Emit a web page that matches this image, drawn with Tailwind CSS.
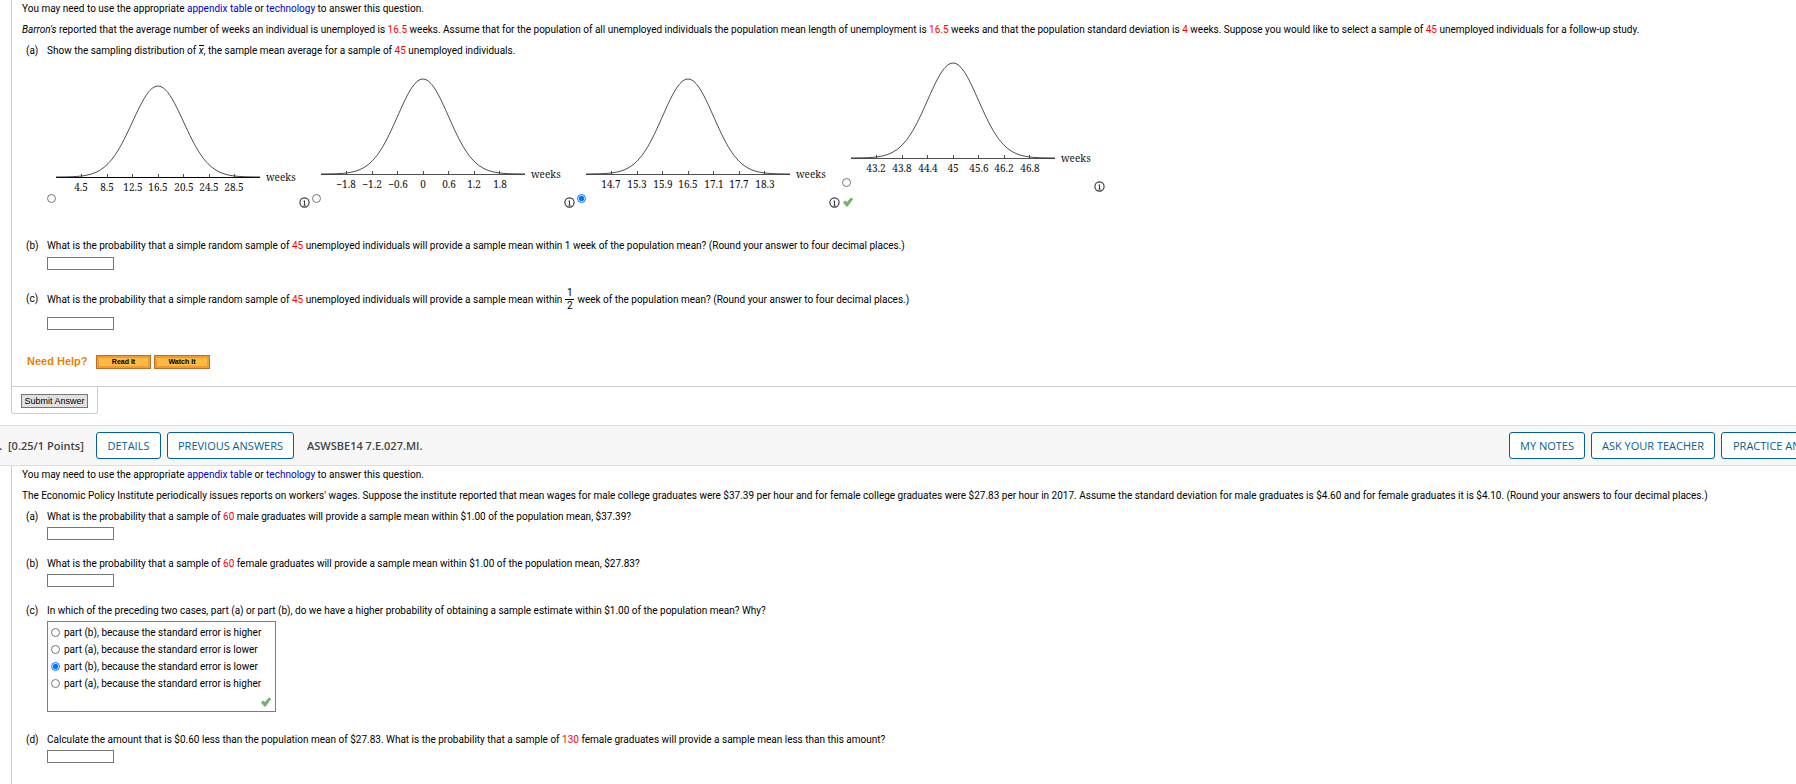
<!DOCTYPE html>
<html lang="en">
<head>
<meta charset="utf-8">
<title>Sampling distributions</title>
<script src="https://cdn.jsdelivr.net/npm/@tailwindcss/browser@4"></script>
</head>
<body class="bg-white overflow-hidden font-['Roboto',sans-serif] text-[10px] leading-[15px] text-black">

<svg class="hidden">
  <symbol id="info" viewBox="0 0 11 11">
    <circle cx="5.5" cy="5.5" r="4.6" fill="#fff" stroke="#333" stroke-width="1.1"/>
    <path d="M5.5 3.6V8.2M4.6 4.1H5.5M4.6 8.2H6.6" fill="none" stroke="#222" stroke-width=".9"/>
  </symbol>
  <symbol id="check" viewBox="0 0 10 10">
    <path d="M0.4 5.6L2.2 3.9L4 5.5L8 0.9L9.7 2.1L4.4 9.2H3.6Z" fill="#6dbb63" stroke="#4b9a45" stroke-width=".6"/>
  </symbol>
</svg>

<main>
  <section class="ml-[11px] border-l border-b border-[#ccc] pt-px pl-[9px] pb-[17px] whitespace-nowrap">
    <div class="grid gap-[6px] pl-px">
      <p>You may need to use the appropriate <a href="#" class="text-[#0000cc]">appendix table</a> or <a href="#" class="text-[#0000cc]">technology</a> to answer this question.</p>
      <p><i>Barron's</i> reported that the average number of weeks an individual is unemployed is <span class="text-[#f00]">16.5</span> weeks. Assume that for the population of all unemployed individuals the population mean length of unemployment is <span class="text-[#f00]">16.5</span> weeks and that the population standard deviation is <span class="text-[#f00]">4</span> weeks. Suppose you would like to select a sample of <span class="text-[#f00]">45</span> unemployed individuals for a follow-up study.</p>
    </div>

    <div class="mt-[6px] flex pl-[5px]">
      <span class="w-[21px]">(a)</span>
      <p>Show the sampling distribution of <span class="inline-block border-t border-black leading-[9px] italic">x</span>, the sample mean average for a sample of <span class="text-[#f00]">45</span> unemployed individuals.</p>
    </div>
    <fieldset class="mt-px flex items-end gap-[2px] pl-[26px] font-['Noto_Serif','DejaVu_Serif',serif]">
      <div class="flex items-end">
        <input type="radio" name="dist" aria-label="Distribution centred at 16.5, spread 4" class="mb-[5px] size-[9px]">
        <svg class="w-[240px] h-[133px]" viewBox="0 0 240 133" fill="none" stroke="#222">
          <path d="M0 102.5H204" stroke="#000" stroke-width="1.2"/>
          <path stroke-width=".8" d="M25.5 99V102M51.5 99V102M76.5 99V102M102.5 99V102M127.5 99V102M153.5 99V102M178.5 99V102"/>
          <path data-base="102" data-height="91" stroke-width=".8"/>
          <g fill="#111" stroke="none" text-anchor="middle" font-size="10"><text x="25" y="116">4.5</text><text x="51" y="116">8.5</text><text x="77" y="116">12.5</text><text x="102" y="116">16.5</text><text x="128" y="116">20.5</text><text x="153" y="116">24.5</text><text x="178" y="116">28.5</text></g>
          <text x="210" y="106" fill="#111" stroke="none" font-size="10">weeks</text>
        </svg>
        <button type="button" aria-label="Description" class="ml-[3px] size-[11px]"><svg class="size-[11px]"><use href="#info"/></svg></button>
      </div>
      <div class="flex items-end">
        <input type="radio" name="dist" aria-label="Distribution centred at 0" class="mb-[5px] size-[9px]">
        <svg class="w-[240px] h-[133px]" viewBox="0 0 240 133" fill="none" stroke="#222">
          <path d="M0 99.5H204" stroke-width=".8"/>
          <path stroke-width=".8" d="M25.5 96V99M51.5 96V99M76.5 96V99M102.5 96V99M127.5 96V99M153.5 96V99M178.5 96V99"/>
          <path data-base="99" data-height="95" stroke-width=".8"/>
          <g fill="#111" stroke="none" text-anchor="middle" font-size="10"><text x="25" y="113">−1.8</text><text x="51" y="113">−1.2</text><text x="77" y="113">−0.6</text><text x="102" y="113">0</text><text x="128" y="113">0.6</text><text x="153" y="113">1.2</text><text x="179" y="113">1.8</text></g>
          <text x="210" y="103" fill="#111" stroke="none" font-size="10">weeks</text>
        </svg>
        <button type="button" aria-label="Description" class="ml-[3px] size-[11px]"><svg class="size-[11px]"><use href="#info"/></svg></button>
      </div>
      <div class="flex items-end">
        <input type="radio" name="dist" checked aria-label="Distribution centred at 16.5, spread 0.6" class="mb-[5px] size-[9px]">
        <svg class="w-[240px] h-[133px]" viewBox="0 0 240 133" fill="none" stroke="#222">
          <path d="M0 99.5H204" stroke-width=".8"/>
          <path stroke-width=".8" d="M25.5 96V99M51.5 96V99M76.5 96V99M102.5 96V99M127.5 96V99M153.5 96V99M178.5 96V99"/>
          <path data-base="99" data-height="95" stroke-width=".8"/>
          <g fill="#111" stroke="none" text-anchor="middle" font-size="10"><text x="25" y="113">14.7</text><text x="51" y="113">15.3</text><text x="77" y="113">15.9</text><text x="102" y="113">16.5</text><text x="128" y="113">17.1</text><text x="153" y="113">17.7</text><text x="179" y="113">18.3</text></g>
          <text x="210" y="103" fill="#111" stroke="none" font-size="10">weeks</text>
        </svg>
        <button type="button" aria-label="Description" class="ml-[3px] size-[11px]"><svg class="size-[11px]"><use href="#info"/></svg></button>
      </div>
      <div>
        <div class="flex items-end">
          <input type="radio" name="dist" aria-label="Distribution centred at 45" class="mb-[5px] size-[9px]">
          <svg class="w-[240px] h-[133px]" viewBox="0 0 240 133" fill="none" stroke="#222">
            <path d="M0 99.5H204" stroke-width=".8"/>
            <path stroke-width=".8" d="M25.5 96V99M51.5 96V99M76.5 96V99M102.5 96V99M127.5 96V99M153.5 96V99M178.5 96V99"/>
            <path data-base="99" data-height="95" stroke-width=".8"/>
            <g fill="#111" stroke="none" text-anchor="middle" font-size="10"><text x="25" y="113">43.2</text><text x="51" y="113">43.8</text><text x="77" y="113">44.4</text><text x="102" y="113">45</text><text x="128" y="113">45.6</text><text x="153" y="113">46.2</text><text x="179" y="113">46.8</text></g>
            <text x="210" y="103" fill="#111" stroke="none" font-size="10">weeks</text>
          </svg>
          <button type="button" aria-label="Description" class="ml-[3px] size-[11px]"><svg class="size-[11px]"><use href="#info"/></svg></button>
        </div>
        <div class="flex h-[16px] items-end pb-px pl-px"><svg class="size-[10px]" role="img" aria-label="Correct"><use href="#check"/></svg></div>
      </div>
    </fieldset>

    <div class="mt-[30px] flex pl-[5px]">
      <span class="w-[21px]">(b)</span>
      <div>
        <label for="q1b" class="block">What is the probability that a simple random sample of <span class="text-[#f00]">45</span> unemployed individuals will provide a sample mean within 1 week of the population mean? (Round your answer to four decimal places.)</label>
        <input id="q1b" type="text" class="mt-[4px] block h-[13px] w-[67px] border border-[#767676]">
      </div>
    </div>
    <div class="mt-[17px] flex pl-[5px]">
      <span class="w-[21px] leading-[24px]">(c)</span>
      <div>
        <label for="q1c" class="flex items-center gap-[3px]"><span>What is the probability that a simple random sample of <span class="text-[#f00]">45</span> unemployed individuals will provide a sample mean within</span><span class="flex w-[9px] flex-col text-center leading-[12px]"><span class="border-b border-black">1</span><span>2</span></span><span>week of the population mean? (Round your answer to four decimal places.)</span></label>
        <input id="q1c" type="text" class="mt-[5px] block h-[13px] w-[67px] border border-[#767676]">
      </div>
    </div>

    <div class="mt-[24px] flex items-center gap-[3px] pl-[6px] font-['Liberation_Sans',sans-serif] font-bold">
      <span class="w-[66px] text-[11px] text-[#e98300]">Need Help?</span>
      <button type="button" class="h-[14px] w-[55px] border border-[#b8722c] bg-[#fdb940] text-[7px] leading-[10px] inset-ring-2 inset-ring-[#f09a35]">Read It</button>
      <button type="button" class="h-[14px] w-[56px] border border-[#b8722c] bg-[#fdb940] text-[7px] leading-[10px] inset-ring-2 inset-ring-[#f09a35]">Watch It</button>
    </div>
  </section>

  <div class="ml-[11px] flex h-[27px] w-[87px] items-center justify-center rounded-b-[3px] border border-t-0 border-[#ccc] pt-px">
    <button type="submit" class="h-[14px] w-[67px] border border-[#767676] bg-[#e1e1e1] font-['Liberation_Sans',sans-serif] text-[9px] leading-[12px] whitespace-nowrap">Submit Answer</button>
  </div>

  <header class="mt-[11px] flex h-[41px] items-center overflow-hidden border-y border-[#ddd] bg-[#f7f7f7] font-['Open_Sans',sans-serif] text-[11px] whitespace-nowrap text-[#006298]">
    <span class="-ml-px w-[9px] font-bold">.</span>
    <span class="w-[88px] font-semibold text-[#444]">[0.25/1 Points]</span>
    <button type="button" class="h-[27px] w-[65px] rounded-[3px] border border-[#006298] bg-white">DETAILS</button>
    <button type="button" class="ml-[6px] h-[27px] w-[127px] rounded-[3px] border border-[#006298] bg-white">PREVIOUS ANSWERS</button>
    <span class="ml-[13px] font-semibold text-[#444]">ASWSBE14 7.E.027.MI.</span>
    <div class="-mr-[53px] ml-auto flex gap-[6px]">
      <button type="button" class="h-[27px] w-[76px] rounded-[3px] border border-[#006298] bg-white">MY NOTES</button>
      <button type="button" class="h-[27px] w-[124px] rounded-[3px] border border-[#006298] bg-white">ASK YOUR TEACHER</button>
      <button type="button" class="h-[27px] w-[128px] rounded-[3px] border border-[#006298] bg-white px-[11px] text-left">PRACTICE ANOTHER</button>
    </div>
  </header>

  <section class="ml-[11px] border-l border-[#ccc] pt-px pl-[9px] pb-[40px] whitespace-nowrap">
    <div class="grid gap-[6px] pl-px">
      <p>You may need to use the appropriate <a href="#" class="text-[#0000cc]">appendix table</a> or <a href="#" class="text-[#0000cc]">technology</a> to answer this question.</p>
      <p>The Economic Policy Institute periodically issues reports on workers' wages. Suppose the institute reported that mean wages for male college graduates were $37.39 per hour and for female college graduates were $27.83 per hour in 2017. Assume the standard deviation for male graduates is $4.60 and for female graduates it is $4.10. (Round your answers to four decimal places.)</p>
    </div>
    <div class="mt-[6px] flex pl-[5px]">
      <span class="w-[21px]">(a)</span>
      <div>
        <label for="q2a" class="block">What is the probability that a sample of <span class="text-[#f00]">60</span> male graduates will provide a sample mean within $1.00 of the population mean, $37.39?</label>
        <input id="q2a" type="text" class="mt-[3px] block h-[13px] w-[67px] border border-[#767676]">
      </div>
    </div>
    <div class="mt-[16px] flex pl-[5px]">
      <span class="w-[21px]">(b)</span>
      <div>
        <label for="q2b" class="block">What is the probability that a sample of <span class="text-[#f00]">60</span> female graduates will provide a sample mean within $1.00 of the population mean, $27.83?</label>
        <input id="q2b" type="text" class="mt-[3px] block h-[13px] w-[67px] border border-[#767676]">
      </div>
    </div>
    <div class="mt-[16px] flex pl-[5px]">
      <span class="w-[21px]">(c)</span>
      <fieldset>
        <legend>In which of the preceding two cases, part (a) or part (b), do we have a higher probability of obtaining a sample estimate within $1.00 of the population mean? Why?</legend>
        <div class="mt-[3px] flex w-[229px] flex-col gap-[2px] border border-[#5a9e32] pt-[3px] pl-[3px]">
          <label class="flex items-center gap-[4px]"><input type="radio" name="q2c" class="size-[9px]">part (b), because the standard error is higher</label>
          <label class="flex items-center gap-[4px]"><input type="radio" name="q2c" class="size-[9px]">part (a), because the standard error is lower</label>
          <label class="flex items-center gap-[4px]"><input type="radio" name="q2c" checked class="size-[9px]">part (b), because the standard error is lower</label>
          <label class="flex items-center gap-[4px]"><input type="radio" name="q2c" class="size-[9px]">part (a), because the standard error is higher</label>
          <svg class="mt-[4px] mr-[4px] mb-[4px] size-[10px] self-end" role="img" aria-label="Correct"><use href="#check"/></svg>
        </div>
      </fieldset>
    </div>
    <div class="mt-[20px] flex pl-[5px]">
      <span class="w-[21px]">(d)</span>
      <div>
        <label for="q2d" class="block">Calculate the amount that is $0.60 less than the population mean of $27.83. What is the probability that a sample of <span class="text-[#f00]">130</span> female graduates will provide a sample mean less than this amount?</label>
        <input id="q2d" type="text" class="mt-[3px] block h-[13px] w-[67px] border border-[#767676]">
      </div>
    </div>
  </section>
</main>

<script>
  // Normal curves: centre 102, one standard deviation = 25.5 units.
  document.querySelectorAll('path[data-height]').forEach(function (p) {
    var d = '';
    for (var x = 0; x <= 204; x += 2) {
      var z = (x - 102) / 25.5;
      d += (x ? 'L' : 'M') + x + ' ' + (p.dataset.base - p.dataset.height * Math.exp(-z * z / 2)).toFixed(2);
    }
    p.setAttribute('d', d);
  });
</script>
</body>
</html>
